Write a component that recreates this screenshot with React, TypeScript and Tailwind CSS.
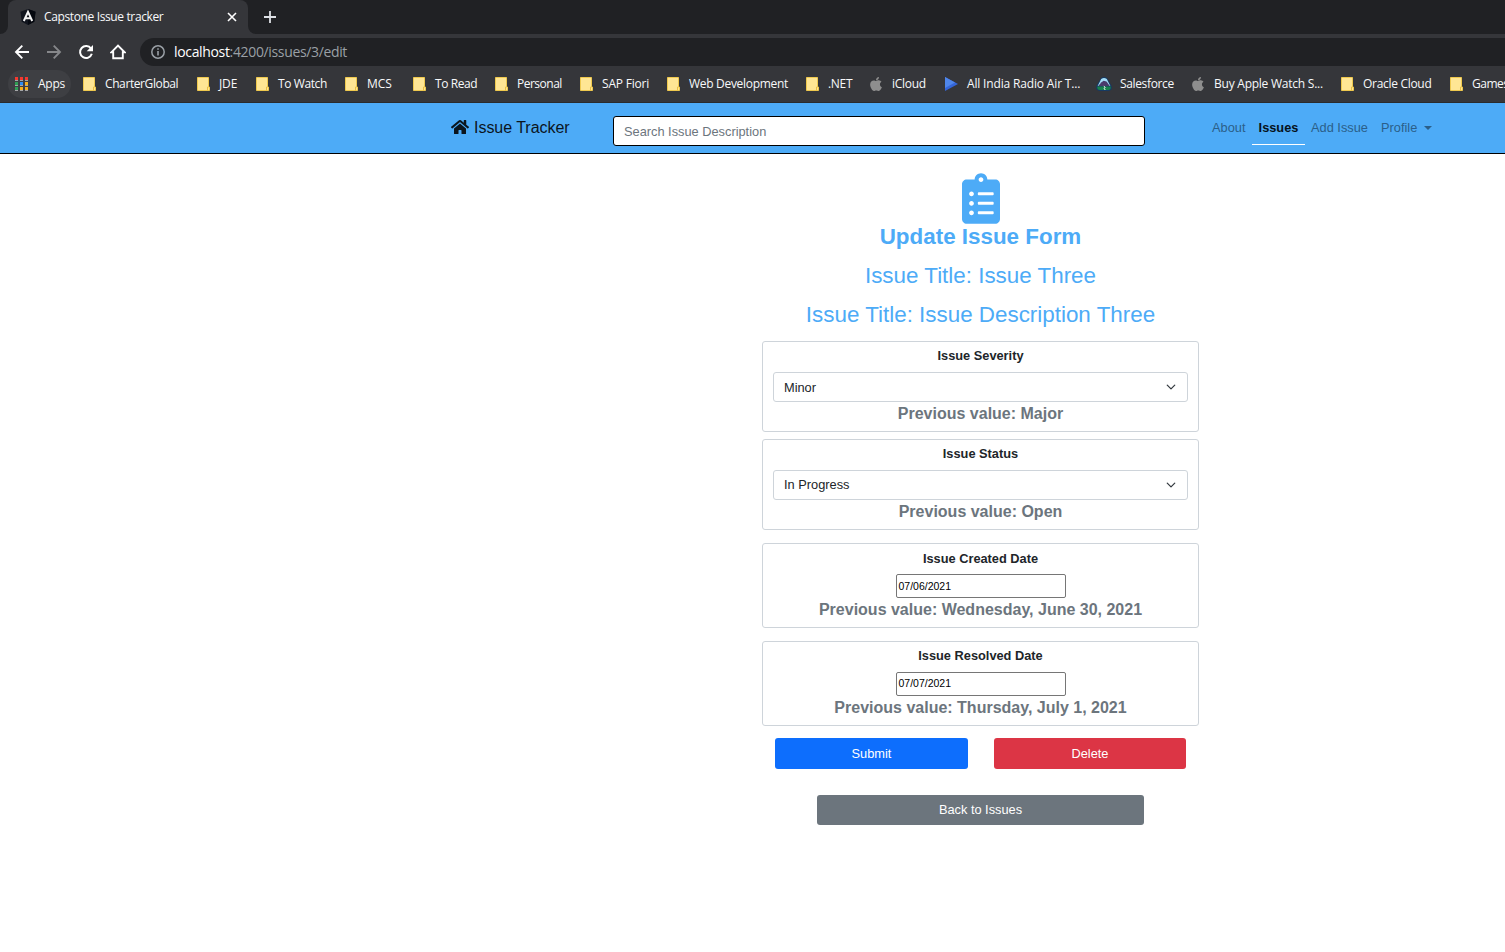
import type { ReactNode } from "react";
import { FaApple, FaClipboardList, FaHome } from "react-icons/fa";

function Folder() {
  return (
    <svg width="14" height="16" viewBox="0 0 14 16">
      <path d="M.5 1.500h11v9.500h1v3.500H.5z" fill="#ffe694" stroke="#efc94e" />
      <path d="M10.500 14.500v-3.500h1" stroke="#e9bf43" fill="none" />
    </svg>
  );
}

function Apple() {
  return <FaApple size={16} className="-ml-0.5 -mt-px shrink-0 text-[#8e8e8e]" />;
}

function Play() {
  return (
    <svg width="14" height="16" viewBox="0 0 14 16">
      <path d="M0 1v14l13-7z" fill="#3465d8" />
      <path d="M0 1v11l10-5.500z" fill="#4f86ea" />
    </svg>
  );
}

function Mountain() {
  return (
    <svg className="-ml-[2px] shrink-0" width="16" height="16" viewBox="0 0 16 16">
      <path d="M4.800 2.200Q8-.2 11.200 2.200L15.400 9.600Q17 14.500 12.500 15h-9Q-1 14.500.6 9.600z" fill="#163a63" />
      <path d="M5.200 3Q8 .9 10.800 3L14.300 10H1.700z" fill="#a3dcf6" />
      <path d="M2.200 10L5.500 6.200 7.600 4.800 10.500 5.400 13.800 10z" fill="#4a3b6b" />
      <path d="M1.300 10.600h13.400q.4 3.200-2.400 3.500H3.700q-2.800-.3-2.400-3.500z" fill="#16834c" />
      <path d="M7.800 10.300l1.400 1-1 1 1 1.700" stroke="#fff" fill="none" />
    </svg>
  );
}

type Mark = { label: string; icon: ReactNode; item: string; text: string };

const marks: Mark[] = [
  { label: "CharterGlobal", icon: <Folder />, item: "w-[114px]", text: "tracking-[-0.4px]" },
  { label: "JDE", icon: <Folder />, item: "w-[59px]", text: "tracking-[-0.1px]" },
  { label: "To Watch", icon: <Folder />, item: "w-[89px]", text: "tracking-[-0.4px]" },
  { label: "MCS", icon: <Folder />, item: "w-[68px]", text: "tracking-[-0.1px]" },
  { label: "To Read", icon: <Folder />, item: "w-[82px]", text: "tracking-[-0.4px]" },
  { label: "Personal", icon: <Folder />, item: "w-[85px]", text: "tracking-[-0.5px]" },
  { label: "SAP Fiori", icon: <Folder />, item: "w-[87px]", text: "tracking-[-0.2px]" },
  { label: "Web Development", icon: <Folder />, item: "w-[139px]", text: "tracking-[-0.3px]" },
  { label: ".NET", icon: <Folder />, item: "w-[64px]", text: "tracking-[-0.3px]" },
  { label: "iCloud", icon: <Apple />, item: "w-[75px]", text: "tracking-[-0.3px]" },
  { label: "All India Radio Air T...", icon: <Play />, item: "w-[153px]", text: "tracking-[-0.16px]" },
  { label: "Salesforce", icon: <Mountain />, item: "w-[94px]", text: "tracking-[-0.35px]" },
  { label: "Buy Apple Watch S...", icon: <Apple />, item: "w-[149px]", text: "tracking-[-0.24px]" },
  { label: "Oracle Cloud", icon: <Folder />, item: "w-[109px]", text: "tracking-[-0.3px]" },
  { label: "Games", icon: <Folder />, item: "w-[70px]", text: "tracking-[-0.5px]" },
];

const appDots = ["#f5392f", "#f5392f", "#f5392f", "#2f9e54", "#2a8cf5", "#f5ad1c", "#2f9e54", "#f5ad1c", "#f5ad1c"];

function Browser() {
  return (
    <div className="h-[103px] border-b border-[#2a2b2d] bg-[#35363a] font-['Open_Sans','Noto_Sans',sans-serif] text-[12px] text-[#f8f9fa]">
      <div className="flex h-[34px] bg-[#202124]">
        <div className="flex w-2 items-end bg-[#35363a]">
          <div className="h-full w-full rounded-br-lg bg-[#202124]" />
        </div>
        <div className="flex w-[240px] items-center rounded-t-lg bg-[#35363a] pl-[12px]">
          <svg width="16" height="16" viewBox="0 0 16 16">
            <path d="M8 0l7.500 2.700-1.200 10L8 16l-6.300-3.300L.5 2.700z" fill="#11151e" />
            <path d="M8 0l7.500 2.700-1.200 10L8 16z" fill="#05080f" />
            <path d="M3.800 12L8 2.800l4.200 9.200M5.500 9.300h5" stroke="#f4f4f4" strokeWidth="2" fill="none" />
          </svg>
          <span className="ml-2 w-[183px] whitespace-nowrap tracking-[-0.37px]">Capstone Issue tracker</span>
          <svg width="10" height="10" viewBox="0 0 10 10">
            <path d="M1 1l8 8M9 1L1 9" stroke="#fff" strokeWidth="1.600" />
          </svg>
        </div>
        <div className="flex flex-1 bg-[#35363a]">
          <div className="flex h-full w-full items-center rounded-bl-lg bg-[#202124] pl-4">
            <svg width="12" height="12" viewBox="0 0 12 12">
              <path d="M6 0v12M0 6h12" stroke="#dee1e6" strokeWidth="1.800" />
            </svg>
          </div>
        </div>
      </div>
      <div className="flex h-[36px] items-center">
        <svg className="ml-[14px]" width="16" height="16" viewBox="0 0 16 16">
          <path d="M15 8H2M8.300 1.700L2 8l6.300 6.300" stroke="#fff" strokeWidth="1.900" fill="none" />
        </svg>
        <svg className="ml-4" width="16" height="16" viewBox="0 0 16 16">
          <path d="M1 8h13M7.700 1.700L14 8l-6.300 6.300" stroke="#86878a" strokeWidth="1.900" fill="none" />
        </svg>
        <svg className="ml-4" width="16" height="16" viewBox="0 0 16 16">
          <path d="M13 4.600A6 6 0 1 0 13.800 9.800" stroke="#fff" strokeWidth="2" fill="none" />
          <path d="M15 1v6.300H8.700z" fill="#fff" />
        </svg>
        <svg className="ml-4" width="16" height="16" viewBox="0 0 16 16">
          <path d="M1.300 8.300L8 1.500l6.700 6.800h-1.900v6H3.200v-6z" stroke="#fff" strokeWidth="1.900" fill="none" />
        </svg>
        <div className="ml-[14px] flex h-7 flex-1 items-center rounded-l-full bg-[#202124] pl-[11px] text-[14px]">
          <svg width="14" height="14" viewBox="0 0 14 14">
            <circle cx="7" cy="7" r="6.200" stroke="#9aa0a6" strokeWidth="1.500" fill="none" />
            <path d="M7 6v4.500M7 3.300v1.500" stroke="#9aa0a6" strokeWidth="1.600" />
          </svg>
          <span className="mb-px ml-[9px] tracking-[-0.34px] text-white">localhost</span>
          <span className="mb-px tracking-[-0.35px] text-[#9aa0a6]">:4200/issues/3/edit</span>
        </div>
      </div>
      <div className="flex h-7 items-center overflow-hidden whitespace-nowrap">
        <div className="ml-2 mr-3 flex h-7 w-[63px] shrink-0 items-center rounded-full bg-[#3e3f43] pl-[7px]">
          <div className="grid w-[13px] grid-cols-3 gap-x-[2px] gap-y-px">
            {appDots.map((color, i) => (
              <i key={i} className="h-[4px] w-[3px] border-b border-[#a5a6a8]" style={{ backgroundColor: color }} />
            ))}
          </div>
          <span className="ml-[10px] tracking-[-0.25px]">Apps</span>
        </div>
        {marks.map((m) => (
          <div key={m.label} className={`flex shrink-0 items-center ${m.item}`}>
            <div className="flex w-[22px] shrink-0">{m.icon}</div>
            <span className={m.text}>{m.label}</span>
          </div>
        ))}
      </div>
    </div>
  );
}

function Card({ title, previous, className, children }: { title: string; previous: string; className: string; children: ReactNode }) {
  return (
    <section className={`flex w-full flex-col items-center rounded-[3px] border border-[#ced4da] px-[10px] ${className}`}>
      <h4 className="text-[12.8px] font-bold leading-[19px]">{title}</h4>
      {children}
      <p className="mt-[2px] text-[16px] font-bold leading-[19px] text-[#6c757d]">{previous}</p>
    </section>
  );
}

function Select({ value, className }: { value: string; className: string }) {
  return (
    <div className="mt-[7px] flex h-[30px] w-full items-center justify-between rounded-[3px] border border-[#ced4da] pl-[10px] pr-[11px]">
      <span className={`leading-[18px] ${className}`}>{value}</span>
      <svg width="10" height="10" viewBox="0 0 16 16">
        <path d="M2 5l6 6 6-6" fill="none" stroke="#343a40" strokeWidth="2" strokeLinecap="round" strokeLinejoin="round" />
      </svg>
    </div>
  );
}

function DateField({ value, className, text }: { value: string; className: string; text: string }) {
  return (
    <div className={`flex h-[24px] w-[170px] shrink-0 items-center rounded-[2px] border border-[#767676] pl-[2px] text-[10.5px] text-black ${className}`}>
      <span className={text}>{value}</span>
    </div>
  );
}

export default function App() {
  return (
    <div className="h-[952px] w-[1505px] overflow-hidden bg-white font-['Liberation_Sans',Arial,sans-serif] text-[12.8px] text-[#212529]">
      <Browser />
      <nav className="flex h-[51px] items-start border-b border-black bg-[#4dabf7] pl-[451px]">
        <div className="flex w-[162px] items-start text-[16px] leading-6 text-[#0b151e]">
          <FaHome size={18} className="mr-[5px] mt-[15px]" />
          <span className="mt-[13px] tracking-[-0.03px]">Issue Tracker</span>
        </div>
        <div className="mt-[13px] flex h-[30px] w-[532px] items-center rounded-[3px] border border-black bg-white pl-[10px] pt-[2px] text-[#6c757d]">
          Search Issue Description
        </div>
        <div className="ml-[67px] mt-[15px] flex leading-[19px] text-[#2b5f89]">
          <span className="w-[40px]">About</span>
          <span className="h-[27px] w-[53px] border-b border-white text-center font-bold text-[#06121b]">Issues</span>
          <span className="ml-[6px] w-[70px]">Add Issue</span>
          <span>Profile</span>
          <i className="ml-[7px] mt-[8px] h-0 w-0 border-x-4 border-t-4 border-x-transparent border-t-[#2b5f89]" />
        </div>
      </nav>
      <main className="ml-[762px] flex w-[437px] flex-col items-center pt-[19px]">
        <FaClipboardList className="h-[51px] w-[38px] text-[#4dabf7]" />
        <div className="-mt-px flex flex-col items-center gap-[12px] text-[22.4px] leading-[27px] text-[#4dabf7]">
          <h1 className="font-bold">Update Issue Form</h1>
          <h2>Issue Title: Issue Three</h2>
          <h2>Issue Title: Issue Description Three</h2>
        </div>
        <Card className="mt-[13px] h-[91px] pt-[4px]" title="Issue Severity" previous="Previous value: Major">
          <Select value="Minor" className="mt-[2px]" />
        </Card>
        <Card className="mt-[7px] h-[91px] pt-[4px]" title="Issue Status" previous="Previous value: Open">
          <Select value="In Progress" className="" />
        </Card>
        <Card className="mt-[13px] h-[85px] pt-[5px]" title="Issue Created Date" previous="Previous value: Wednesday, June 30, 2021">
          <DateField value="07/06/2021" className="mt-[6px]" text="mt-[2px]" />
        </Card>
        <Card className="mt-[13px] h-[85px] pt-[4px]" title="Issue Resolved Date" previous="Previous value: Thursday, July 1, 2021">
          <DateField value="07/07/2021" className="mt-[7px]" text="" />
        </Card>
        <div className="mt-[12px] flex w-full gap-[26px] px-[13px] text-white">
          <button className="h-[31px] w-[193px] rounded-[3px] bg-[#0d6efd]">Submit</button>
          <button className="h-[31px] w-[192px] rounded-[3px] bg-[#dc3545]">Delete</button>
        </div>
        <button className="mt-[26px] h-[30px] w-[327px] rounded-[3px] bg-[#6c757d] text-white">Back to Issues</button>
      </main>
    </div>
  );
}
